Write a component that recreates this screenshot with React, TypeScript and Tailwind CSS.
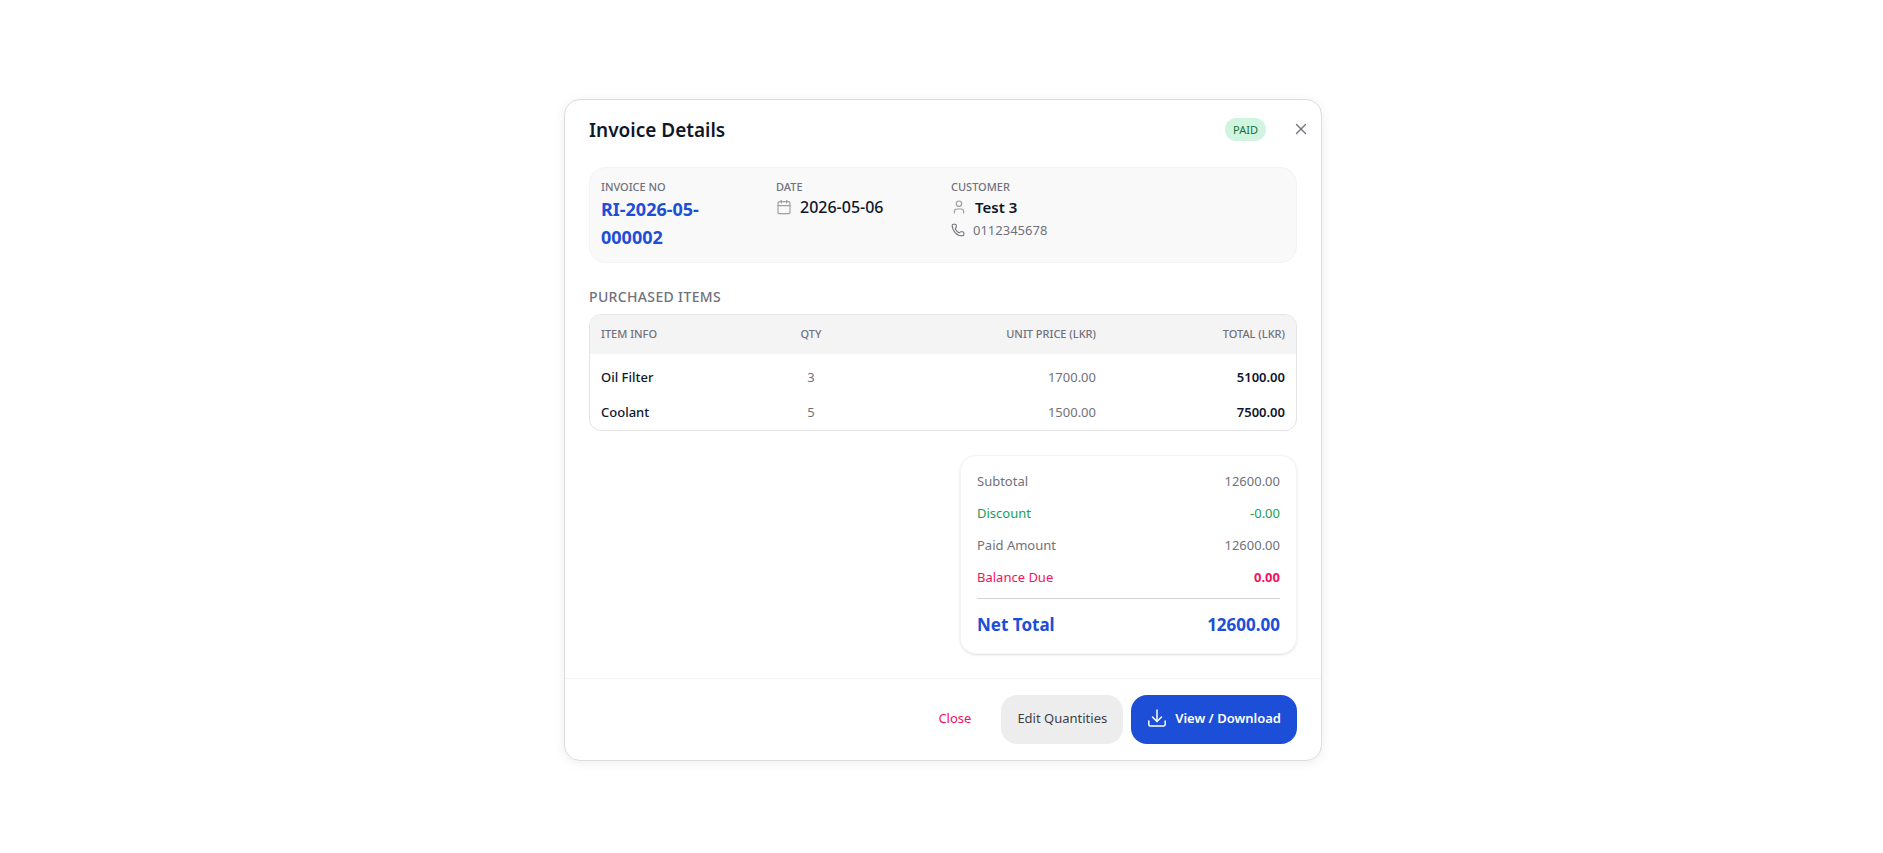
import type { ReactNode } from "react";
import { Calendar, Phone, User, X } from "lucide-react";

interface Item {
    name: string;
    qty: number;
    price: string;
    total: string;
}

const items: Item[] = [
    { name: "Oil Filter", qty: 3, price: "1700.00", total: "5100.00" },
    { name: "Coolant", qty: 5, price: "1500.00", total: "7500.00" },
];

const summary = [
    { label: "Subtotal", value: "12600.00", color: "text-zinc-500", valueClass: "" },
    { label: "Discount", value: "-0.00", color: "text-[#17a057]", valueClass: "" },
    { label: "Paid Amount", value: "12600.00", color: "text-zinc-500", valueClass: "" },
    { label: "Balance Due", value: "0.00", color: "text-[#f31260]", valueClass: "font-bold" },
];

function Field({ label, children }: { label: string; children: ReactNode }) {
    return (
        <div>
            <dt className="text-[11px] leading-4 font-medium text-zinc-500">{label}</dt>
            <dd>{children}</dd>
        </div>
    );
}

function DownloadIcon() {
    return (
        <svg
            className="size-5"
            viewBox="0 0 20 20"
            fill="none"
            stroke="currentColor"
            strokeWidth="1.5"
            strokeLinecap="round"
            strokeLinejoin="round"
            aria-hidden="true"
        >
            <path d="M10 1v11.500" />
            <path d="M5.500 8 10 12.500l4.500-4.500" />
            <path d="M1.800 12v3.500A1.500 1.500 0 0 0 3.300 17h13.400a1.500 1.500 0 0 0 1.500-1.500V12" />
        </svg>
    );
}

export default function App() {
    return (
        <main className="flex min-h-screen items-center justify-center bg-white pt-1.5 pl-[3px] font-['Noto_Sans',sans-serif]">
            <section
                role="dialog"
                aria-labelledby="invoice-title"
                className="w-full max-w-[758px] rounded-2xl border border-[#dcdcde] bg-white shadow-[0_2px_12px_rgba(0,0,0,0.07)]"
            >
                {/* Header */}
                <header className="flex items-start pt-4 pr-[7px] pl-6">
                    <h2 id="invoice-title" className="text-[19px] leading-7 font-semibold text-slate-900">
                        Invoice Details
                    </h2>
                    <span className="mt-0.5 ml-auto rounded-full bg-[#d1f4e0] px-2 text-[11px] leading-[23px] text-[#12713d]">
                        PAID
                    </span>
                    <button type="button" aria-label="Close dialog" className="ml-[22px] p-1 text-zinc-500">
                        <X className="size-[18px]" strokeWidth={1.8} />
                    </button>
                </header>

                <div className="px-6 pt-[23px] pb-6">
                    {/* Invoice info */}
                    <dl className="grid grid-cols-4 gap-4 rounded-2xl border border-zinc-100 bg-[#f9f9f9] p-[11px]">
                        <Field label="INVOICE NO">
                            <span className="block text-[18px] leading-7 font-bold text-[#1d4ed8]">
                                RI-2026-05-000002
                            </span>
                        </Field>
                        <Field label="DATE">
                            <span className="flex items-center gap-2 text-[16px] leading-6 font-medium text-slate-900">
                                <Calendar className="size-4 text-zinc-400" strokeWidth={1.8} />
                                2026-05-06
                            </span>
                        </Field>
                        <Field label="CUSTOMER">
                            <span className="flex items-center gap-2 text-[15px] leading-6 font-semibold text-slate-900">
                                <User className="size-4 text-zinc-400" strokeWidth={1.8} />
                                Test 3
                            </span>
                            <span className="flex items-center gap-2 text-[13px] leading-[22px] text-zinc-500">
                                <Phone className="size-3.5" strokeWidth={1.8} />
                                0112345678
                            </span>
                        </Field>
                    </dl>

                    {/* Items */}
                    <h3 className="mt-6 mb-[7px] text-[14px] leading-5 font-medium tracking-wide text-zinc-500">
                        PURCHASED ITEMS
                    </h3>
                    <div className="overflow-hidden rounded-xl border border-zinc-200">
                        <table className="w-full table-fixed text-[13px] leading-5">
                            <thead className="bg-zinc-100 text-[11px] text-zinc-500">
                                <tr className="h-[39px]">
                                    <th className="w-[172px] px-[11px] text-left font-medium">ITEM INFO</th>
                                    <th className="w-[98px] px-3 text-center font-medium">QTY</th>
                                    <th className="px-3 text-right font-medium">UNIT PRICE (LKR)</th>
                                    <th className="w-[188px] px-[11px] text-right font-medium">TOTAL (LKR)</th>
                                </tr>
                            </thead>
                            <tbody className="before:block before:h-1.5">
                                {items.map((item) => (
                                    <tr key={item.name} className="h-[35px]">
                                        <td className="px-[11px] font-medium text-slate-900">{item.name}</td>
                                        <td className="px-3 text-center text-zinc-500">{item.qty}</td>
                                        <td className="px-3 text-right text-zinc-500">{item.price}</td>
                                        <td className="px-[11px] text-right font-semibold text-slate-900">{item.total}</td>
                                    </tr>
                                ))}
                            </tbody>
                        </table>
                    </div>

                    {/* Totals */}
                    <div className="mt-6 ml-auto w-[337px] rounded-2xl border border-zinc-100 px-4 pt-[15px] pb-3.5 shadow-sm">
                        <dl className="space-y-3 text-[13px] leading-5">
                            {summary.map((row) => (
                                <div key={row.label} className={`flex justify-between ${row.color}`}>
                                    <dt>{row.label}</dt>
                                    <dd className={row.valueClass}>{row.value}</dd>
                                </div>
                            ))}
                        </dl>
                        <div className="mt-[11px] flex justify-between border-t border-zinc-300 pt-3 text-[17px] leading-7 font-bold text-[#1d4ed8]">
                            <span>Net Total</span>
                            <span>12600.00</span>
                        </div>
                    </div>
                </div>

                {/* Footer */}
                <footer className="flex justify-end gap-2 border-t border-zinc-100 px-6 py-4 text-[13px]">
                    <button type="button" className="mr-2.5 h-[49px] px-3 text-[#f31260]">
                        Close
                    </button>
                    <button type="button" className="h-[49px] rounded-2xl bg-[#ededee] px-4 text-zinc-700">
                        Edit Quantities
                    </button>
                    <button
                        type="button"
                        className="flex h-[49px] items-center gap-2 rounded-2xl bg-[#1d4ed8] px-4 font-semibold text-white"
                    >
                        <DownloadIcon />
                        View / Download
                    </button>
                </footer>
            </section>
        </main>
    );
}
